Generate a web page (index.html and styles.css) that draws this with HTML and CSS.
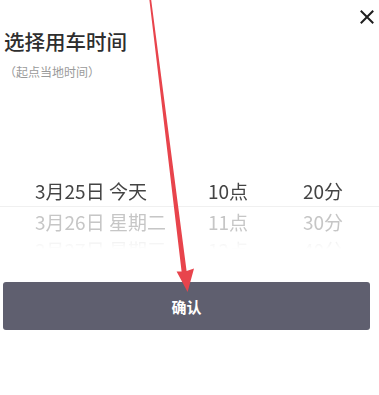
FILE: index.html
```html
<!DOCTYPE html>
<html lang="zh-CN">
<head>
<meta charset="utf-8">
<title>选择用车时间</title>
<link rel="stylesheet" href="styles.css">
</head>
<body>
<div class="sheet">
  <header class="header">
    <div class="heading">
      <h1 class="title">选择用车时间</h1>
      <p class="subtitle">（起点当地时间）</p>
    </div>
    <button class="close" aria-label="关闭">
      <svg width="14" height="14" viewBox="0 0 14 14"><path d="M1.5 1.5 L12.5 12.5 M12.5 1.5 L1.5 12.5" stroke="#1e1e1e" stroke-width="2" stroke-linecap="square" fill="none"/></svg>
    </button>
  </header>

  <div class="picker">
    <div class="row row-current">
      <span>3月25日 今天</span><span>10点</span><span>20分</span>
    </div>
    <div class="row row-next">
      <span>3月26日 星期二</span><span>11点</span><span>30分</span>
    </div>
    <div class="row row-far">
      <span>3月27日 星期三</span><span>12点</span><span>40分</span>
    </div>
  </div>

  <button class="confirm">确认</button>
</div>

<svg class="arrow" width="379" height="395" viewBox="0 0 379 395">
  <polygon points="149.4,0 151.2,0 186.6,271 194,268.5 187.6,292 176.6,271.5 181.6,271.5" fill="#e8444c"/>
</svg>
</body>
</html>
```

FILE: styles.css
```css
html, body {
  margin: 0;
  padding: 0;
  background: #ffffff;
}

body {
  width: 379px;
  height: 395px;
  overflow: hidden;
  position: relative;
  font-family: "Noto Sans CJK SC", "Noto Sans", sans-serif;
  color: #333333;
}

.sheet {
  display: flex;
  flex-direction: column;
}

.header {
  display: flex;
  justify-content: space-between;
  align-items: flex-start;
  padding: 10px 5px 0 4px;
}

.heading {
  margin-top: 19px;
}

.title {
  margin: 0;
  font-size: 20.5px;
  line-height: 24px;
  font-weight: 500;
  color: #2e2e2e;
}

.subtitle {
  margin: 11px 0 0 0;
  font-size: 12px;
  line-height: 16px;
  color: #9a9a9a;
}

.close {
  border: 0;
  padding: 0;
  margin: 0;
  background: none;
  width: 14px;
  height: 14px;
  display: block;
}

.close svg {
  display: block;
}

.picker {
  margin-top: 94px;
  -webkit-mask-image: linear-gradient(to bottom, #000 0, #000 62px, rgba(0,0,0,0.55) 68px, rgba(0,0,0,0) 75px);
  mask-image: linear-gradient(to bottom, #000 0, #000 62px, rgba(0,0,0,0.55) 68px, rgba(0,0,0,0) 75px);
}

.row {
  display: grid;
  grid-template-columns: 173px 95px 1fr;
  padding-left: 35px;
  align-items: center;
  font-size: 19px;
  white-space: nowrap;
}

.row-current {
  height: 32px;
  color: #444444;
  border-bottom: 1px solid #f0f0f0;
}

.row-next {
  height: 29px;
  color: #c6c6c6;
}

.row-far {
  height: 24px;
  color: #e8e8e8;
}

.confirm {
  margin: 22px 9px 0 3px;
  height: 48px;
  border: 0;
  border-radius: 3px;
  background: #5f5f6f;
  color: #ffffff;
  font-family: "Noto Sans CJK SC", sans-serif;
  font-size: 15px;
  font-weight: 700;
  padding: 0;
}

.arrow {
  position: absolute;
  left: 0;
  top: 0;
  pointer-events: none;
}
```
